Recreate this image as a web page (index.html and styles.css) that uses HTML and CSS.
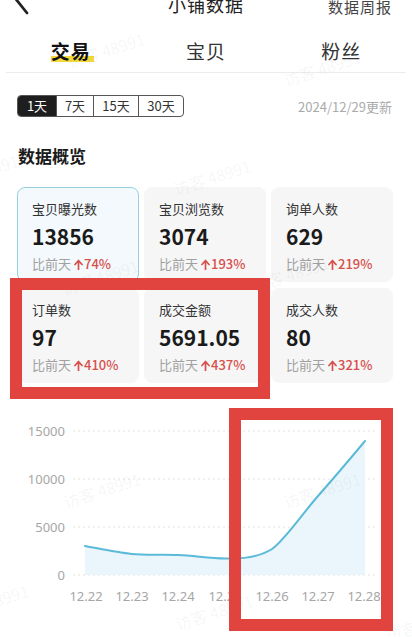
FILE: index.html
```html
<!DOCTYPE html>
<html lang="zh">
<head>
<meta charset="utf-8">
<link rel="stylesheet" href="styles.css">
</head>
<body>
<div class="page">
  <header class="topbar">
    <svg class="back" width="40" height="30" viewBox="0 0 40 30"><path d="M27 -5 L15 10 L27 25" fill="none" stroke="#222" stroke-width="2.8" stroke-linecap="round" stroke-linejoin="round"/></svg>
    <div class="title">小铺数据</div>
    <div class="weekly">数据周报</div>
  </header>

  <nav class="tabs">
    <div class="tab"><span class="tab-label active">交易</span></div>
    <div class="tab"><span class="tab-label">宝贝</span></div>
    <div class="tab"><span class="tab-label">粉丝</span></div>
  </nav>

  <div class="daterow">
    <div class="seg">
      <span class="seg-item on">1天</span>
      <span class="seg-item">7天</span>
      <span class="seg-item w">15天</span>
      <span class="seg-item w">30天</span>
    </div>
    <div class="updated">2024/12/29更新</div>
  </div>

  <h2 class="section">数据概览</h2>

  <div class="cards">
    <div class="card sel">
      <div class="c-label">宝贝曝光数</div>
      <div class="c-value">13856</div>
      <div class="c-cmp">比前天<svg class="arr" width="9" height="11" viewBox="0 0 9 11"><path d="M4.5 10.5 V2 M1 5.5 L4.5 1.5 L8 5.5" fill="none" stroke="#d6504c" stroke-width="1.7" stroke-linejoin="round" stroke-linecap="round"/></svg><span class="up">74%</span></div>
    </div>
    <div class="card">
      <div class="c-label">宝贝浏览数</div>
      <div class="c-value">3074</div>
      <div class="c-cmp">比前天<svg class="arr" width="9" height="11" viewBox="0 0 9 11"><path d="M4.5 10.5 V2 M1 5.5 L4.5 1.5 L8 5.5" fill="none" stroke="#d6504c" stroke-width="1.7" stroke-linejoin="round" stroke-linecap="round"/></svg><span class="up">193%</span></div>
    </div>
    <div class="card">
      <div class="c-label">询单人数</div>
      <div class="c-value">629</div>
      <div class="c-cmp">比前天<svg class="arr" width="9" height="11" viewBox="0 0 9 11"><path d="M4.5 10.5 V2 M1 5.5 L4.5 1.5 L8 5.5" fill="none" stroke="#d6504c" stroke-width="1.7" stroke-linejoin="round" stroke-linecap="round"/></svg><span class="up">219%</span></div>
    </div>
    <div class="card">
      <div class="c-label">订单数</div>
      <div class="c-value">97</div>
      <div class="c-cmp">比前天<svg class="arr" width="9" height="11" viewBox="0 0 9 11"><path d="M4.5 10.5 V2 M1 5.5 L4.5 1.5 L8 5.5" fill="none" stroke="#d6504c" stroke-width="1.7" stroke-linejoin="round" stroke-linecap="round"/></svg><span class="up">410%</span></div>
    </div>
    <div class="card">
      <div class="c-label">成交金额</div>
      <div class="c-value">5691.05</div>
      <div class="c-cmp">比前天<svg class="arr" width="9" height="11" viewBox="0 0 9 11"><path d="M4.5 10.5 V2 M1 5.5 L4.5 1.5 L8 5.5" fill="none" stroke="#d6504c" stroke-width="1.7" stroke-linejoin="round" stroke-linecap="round"/></svg><span class="up">437%</span></div>
    </div>
    <div class="card">
      <div class="c-label">成交人数</div>
      <div class="c-value">80</div>
      <div class="c-cmp">比前天<svg class="arr" width="9" height="11" viewBox="0 0 9 11"><path d="M4.5 10.5 V2 M1 5.5 L4.5 1.5 L8 5.5" fill="none" stroke="#d6504c" stroke-width="1.7" stroke-linejoin="round" stroke-linecap="round"/></svg><span class="up">321%</span></div>
    </div>
  </div>

  <div class="chart">
    <svg width="412" height="237" viewBox="0 0 412 237">
      <g class="grid">
        <line x1="73" y1="30" x2="378" y2="30"/>
        <line x1="73" y1="78" x2="378" y2="78"/>
        <line x1="73" y1="126" x2="378" y2="126"/>
        <line x1="73" y1="174" x2="378" y2="174"/>
      </g>
      <g class="ylab">
        <text x="65" y="35">15000</text>
        <text x="65" y="83">10000</text>
        <text x="65" y="131">5000</text>
        <text x="65" y="179">0</text>
      </g>
      <path class="area" d="M85 145 C92.8 146.3 116.1 151.5 131.7 153 C147.3 154.5 162.7 153.2 178.3 154 C193.9 154.8 209.4 157 225 157.5 C240 158 258 157 272 148 C284 140 303 112 318 95 C333 78 355 52 365 40 L365 174 L85 174 Z"/>
      <path class="line" d="M85 145 C92.8 146.3 116.1 151.5 131.7 153 C147.3 154.5 162.7 153.2 178.3 154 C193.9 154.8 209.4 157 225 157.5 C240 158 258 157 272 148 C284 140 303 112 318 95 C333 78 355 52 365 40"/>
      <g class="xlab">
        <text x="86" y="200">12.22</text>
        <text x="132" y="200">12.23</text>
        <text x="178" y="200">12.24</text>
        <text x="225" y="200">12.25</text>
        <text x="272" y="200">12.26</text>
        <text x="318" y="200">12.27</text>
        <text x="364" y="200">12.28</text>
      </g>
    </svg>
  </div>

  <div class="wm" style="left:66px;top:38px">访客 48991</div>
  <div class="wm" style="left:282px;top:56px">访客 48991</div>
  <div class="wm" style="left:-60px;top:160px">访客 48991</div>
  <div class="wm" style="left:172px;top:165px">访客 48991</div>
  <div class="wm" style="left:60px;top:265px">访客 48991</div>
  <div class="wm" style="left:250px;top:262px">访客 48991</div>
  <div class="wm" style="left:62px;top:478px">访客 48991</div>
  <div class="wm" style="left:282px;top:478px">访客 48991</div>
  <div class="wm" style="left:-50px;top:590px">访客 48991</div>
  <div class="wm" style="left:174px;top:600px">访客 48991</div>
  <div class="wm" style="left:384px;top:612px">访客 48991</div>

  <div class="redbox box1"></div>
  <div class="redbox box2"></div>
</div>
</body>
</html>
```

FILE: styles.css
```css
* { box-sizing: border-box; }
html, body { margin: 0; padding: 0; background: #fff; }
body {
  font-family: "Noto Sans CJK SC", "Noto Sans", sans-serif;
  color: #1c1c1c;
  overflow: hidden;
}
.page {
  position: relative;
  width: 412px;
  height: 637px;
  overflow: hidden;
}
.topbar {
  height: 30px;
  margin-top: -12px;
  display: flex;
  align-items: center;
  padding: 0 20px 0 0;
  position: relative;
}
.back { flex: none; display: block; }
.title {
  position: absolute;
  left: 0; right: 0;
  text-align: center;
  font-size: 18px;
  line-height: 24px;
  top: 4px;
  color: #222;
  letter-spacing: 1px;
}
.weekly {
  margin-left: auto;
  font-size: 15px;
  color: #444;
  margin-top: 6px;
  letter-spacing: 1px;
}
.tabs {
  display: grid;
  grid-template-columns: 1fr 1fr 1fr;
  height: 55px;
  margin: 0 6px;
  border-bottom: 1px solid #ececec;
}
.tab {
  display: flex;
  justify-content: center;
  align-items: flex-end;
  padding-bottom: 9px;
}
.tab:first-child { padding-right: 4px; }
.tab:last-child { padding-left: 4px; }
.tab-label {
  font-size: 19px;
  line-height: 24px;
  color: #333;
  position: relative;
  letter-spacing: 1px;
}
.tab-label.active {
  font-weight: 700;
  color: #111;
  z-index: 0;
}
.tab-label.active::after {
  content: "";
  position: absolute;
  left: 0; right: -3px;
  bottom: 1px;
  height: 6px;
  background: #f4d93c;
  z-index: -1;
}
.daterow {
  display: flex;
  align-items: center;
  justify-content: space-between;
  margin-top: 22px;
  padding: 0 20px 0 17px;
  height: 22px;
}
.seg {
  display: flex;
  border: 1px solid #555;
  border-radius: 4px;
  overflow: hidden;
  height: 22px;
}
.seg-item {
  width: 37px;
  text-align: center;
  font-size: 13px;
  line-height: 20px;
  color: #333;
  border-left: 1px solid #555;
}
.seg-item:first-child { border-left: 0; }
.seg-item.w { width: 45px; }
.seg-item.on { background: #1e1e1e; color: #fff; width: 38px; }
.updated {
  font-size: 13px;
  color: #aaa;
}
.section {
  margin: 27px 0 0 18px;
  font-size: 17px;
  line-height: 24px;
  font-weight: 700;
  color: #1a1a1a;
}
.cards {
  display: grid;
  grid-template-columns: repeat(3, 1fr);
  gap: 6px 5px;
  margin: 19px 19px 0 17px;
}
.card {
  height: 95px;
  background: #f6f6f7;
  border-radius: 8px;
  padding: 12px 0 0 14px;
  border: 1px solid #f6f6f7;
}
.card.sel {
  background: #f3f9fc;
  border-color: #94d0e0;
}
.c-label {
  font-size: 13px;
  line-height: 18px;
  color: #333;
}
.c-value {
  font-size: 21px;
  line-height: 28px;
  font-weight: 700;
  color: #1a1a1a;
  margin-top: 4px;
}
.c-cmp {
  font-size: 13px;
  line-height: 20px;
  color: #a0a0a0;
  margin-top: 4px;
  display: flex;
  align-items: center;
}
.arr {
  display: block;
  margin: 0 1px 0 3px;
}
.up {
  color: #d6504c;
  font-weight: 500;
}
.chart {
  margin-top: 18px;
}
.chart svg { display: block; }
.grid line {
  stroke: #e2e2e2;
  stroke-width: 1;
  stroke-dasharray: 2 3;
}
.ylab text {
  text-anchor: end;
  font-size: 13px;
  fill: #a6a6a6;
  font-family: "Noto Sans", sans-serif;
}
.xlab text {
  text-anchor: middle;
  font-size: 13px;
  fill: #a6a6a6;
  font-family: "Noto Sans", sans-serif;
}
.area { fill: #eaf6fc; }
.line {
  fill: none;
  stroke: #5bbad8;
  stroke-width: 2;
  stroke-linecap: round;
}
.wm {
  position: absolute;
  font-size: 16px;
  color: rgba(0,0,0,0.05);
  transform: rotate(-18deg);
  white-space: nowrap;
  pointer-events: none;
}
.redbox {
  position: absolute;
  border: 12px solid #e1443e;
}
.box1 { left: 10px; top: 278px; width: 260px; height: 121px; }
.box2 { left: 229px; top: 408px; width: 164px; height: 223px; }
```
